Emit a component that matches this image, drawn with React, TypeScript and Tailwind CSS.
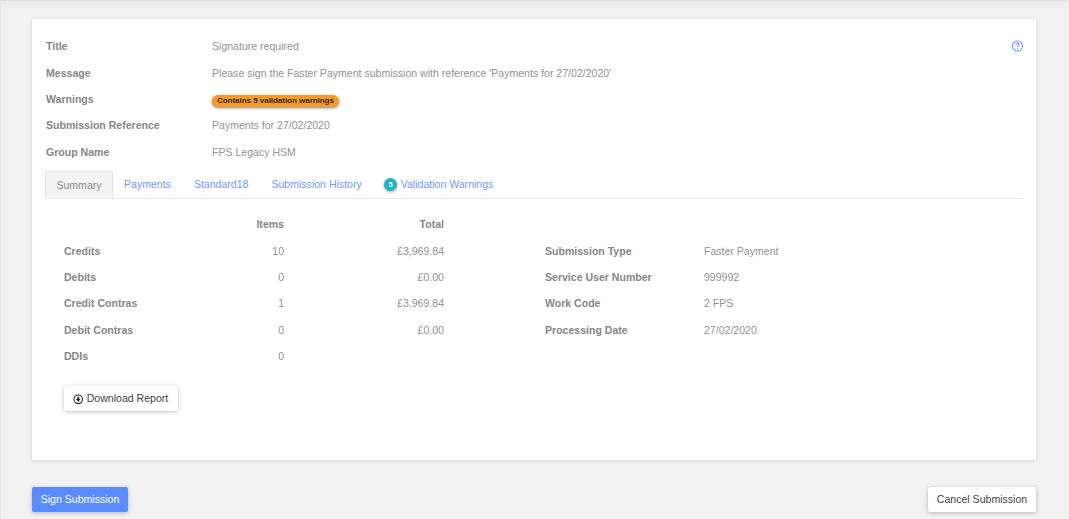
import React from "react";

const infoRows: [string, React.ReactNode][] = [
  ["Title", "Signature required"],
  ["Message", "Please sign the Faster Payment submission with reference 'Payments for 27/02/2020'"],
  [
    "Warnings",
    <span className="inline-block h-[12px] rounded-full bg-[#fb9a22] px-[5px] text-[8px] leading-[12px] font-bold tracking-[-0.03px] text-[#2a2a2a] shadow-[0_1px_3px_rgba(0,0,0,0.5)]">
      Contains 5 validation warnings
    </span>,
  ],
  ["Submission Reference", "Payments for 27/02/2020"],
  ["Group Name", "FPS Legacy HSM"],
];

const totals = [
  ["Credits", "10", "£3,969.84"],
  ["Debits", "0", "£0.00"],
  ["Credit Contras", "1", "£3,969.84"],
  ["Debit Contras", "0", "£0.00"],
  ["DDIs", "0", ""],
];

const details = [
  ["Submission Type", "Faster Payment"],
  ["Service User Number", "999992"],
  ["Work Code", "2 FPS"],
  ["Processing Date", "27/02/2020"],
];

export default function App() {
  return (
    <div className="relative h-[519px] w-[1069px] overflow-hidden bg-[#f2f2f2] font-['Liberation_Sans',Arial,sans-serif] text-[10.55px] text-[#929292]">
      <div className="absolute inset-x-0 top-0 h-[1px] bg-[#e0e0e0] shadow-[0_0_6px_rgba(0,0,0,0.28)]" />
      <div className="absolute inset-y-0 left-0 w-[1px] bg-[#e8e8e8] shadow-[0_0_8px_rgba(0,0,0,0.12)]" />

      <div className="flex flex-col pt-[19px] pr-[33px] pl-[32px]">
        <section className="h-[441px] bg-white px-[14px] pt-[15px] shadow-[0_1px_4px_rgba(0,0,0,0.13)]">
          <div className="flex justify-between">
            <div className="flex flex-col">
              {infoRows.map(([label, value], i) => (
                <div key={i} className="flex h-[26.4px] items-center">
                  <div className="w-[166px] font-bold text-[#868686]">{label}</div>
                  <div>{value}</div>
                </div>
              ))}
            </div>
            <div className="pt-[6px]">
              <svg width="12" height="12" viewBox="0 0 12 12" fill="none" className="translate-x-[1.5px] text-[#6f94ff]">
                <circle cx="6" cy="6" r="5" stroke="currentColor" strokeWidth="1.1" />
                <path d="M4.4 4.7c0-1 .7-1.6 1.6-1.6s1.6.6 1.6 1.4c0 1.1-1.5 1.2-1.5 2.4" stroke="currentColor" strokeWidth="1.1" />
                <circle cx="6" cy="8.7" r=".7" fill="currentColor" />
              </svg>
            </div>
          </div>

          <nav className="-mx-[1px] mt-[5px] flex h-[28px] border-b border-[#e6e6e6] text-[#7197ff]">
            <div className="flex h-[28px] w-[68px] items-center justify-center rounded-t-[2px] border border-b-0 border-[#e2e2e2] bg-[#f4f4f4] text-[#8b8b8b]">Summary</div>
            <div className="ml-[11px] flex items-center">Payments</div>
            <div className="ml-[23px] flex items-center">Standard18</div>
            <div className="ml-[23px] flex items-center">Submission History</div>
            <div className="ml-[22px] flex items-center">
              <span className="mr-[3.5px] flex h-[13.5px] w-[13.5px] items-center justify-center rounded-full bg-[#20b2c8] text-[7.5px] font-bold text-[#e8fbff] shadow-[0_1px_3px_rgba(0,0,0,0.4)]">5</span>
              Validation Warnings
            </div>
          </nav>

          <div className="mt-[13px] flex pl-[18px]">
            <div className="w-[380px]">
              <div className="flex h-[26.4px] items-center font-bold text-[#868686]">
                <div className="w-[140px]" />
                <div className="w-[80px] text-right">Items</div>
                <div className="w-[160px] text-right">Total</div>
              </div>
              {totals.map(([a, b, c]) => (
                <div key={a} className="flex h-[26.4px] items-center">
                  <div className="w-[140px] font-bold text-[#868686]">{a}</div>
                  <div className="w-[80px] text-right">{b}</div>
                  <div className="w-[160px] text-right">{c}</div>
                </div>
              ))}
            </div>
            <div className="ml-[101px] pt-[26.4px]">
              {details.map(([a, b]) => (
                <div key={a} className="flex h-[26.4px] items-center">
                  <div className="w-[159px] font-bold text-[#868686]">{a}</div>
                  <div>{b}</div>
                </div>
              ))}
            </div>
          </div>

          <button className="mt-[16px] ml-[18px] flex h-[25px] w-[113.5px] items-center justify-center gap-[3px] rounded-[2px] bg-white text-[#3f3f3f] shadow-[0_1px_4px_rgba(0,0,0,0.25)]">
            <svg width="10.5" height="10.5" viewBox="0 0 11 11" fill="none">
              <circle cx="5.5" cy="5.5" r="4.5" stroke="#222" strokeWidth="1.1" />
              <path d="M4.5 2.8h2v2.5H8L5.5 8 3 5.3h1.5z" fill="#222" />
            </svg>
            Download Report
          </button>
        </section>

        <div className="mt-[27px] flex justify-between">
          <button className="h-[25px] w-[96px] rounded-[2px] bg-[#5b8cff] text-white shadow-[0_1px_4px_rgba(0,0,0,0.25)]">Sign Submission</button>
          <button className="h-[25px] w-[108px] rounded-[2px] bg-white text-[#3f3f3f] shadow-[0_1px_4px_rgba(0,0,0,0.25)]">Cancel Submission</button>
        </div>
      </div>
    </div>
  );
}
